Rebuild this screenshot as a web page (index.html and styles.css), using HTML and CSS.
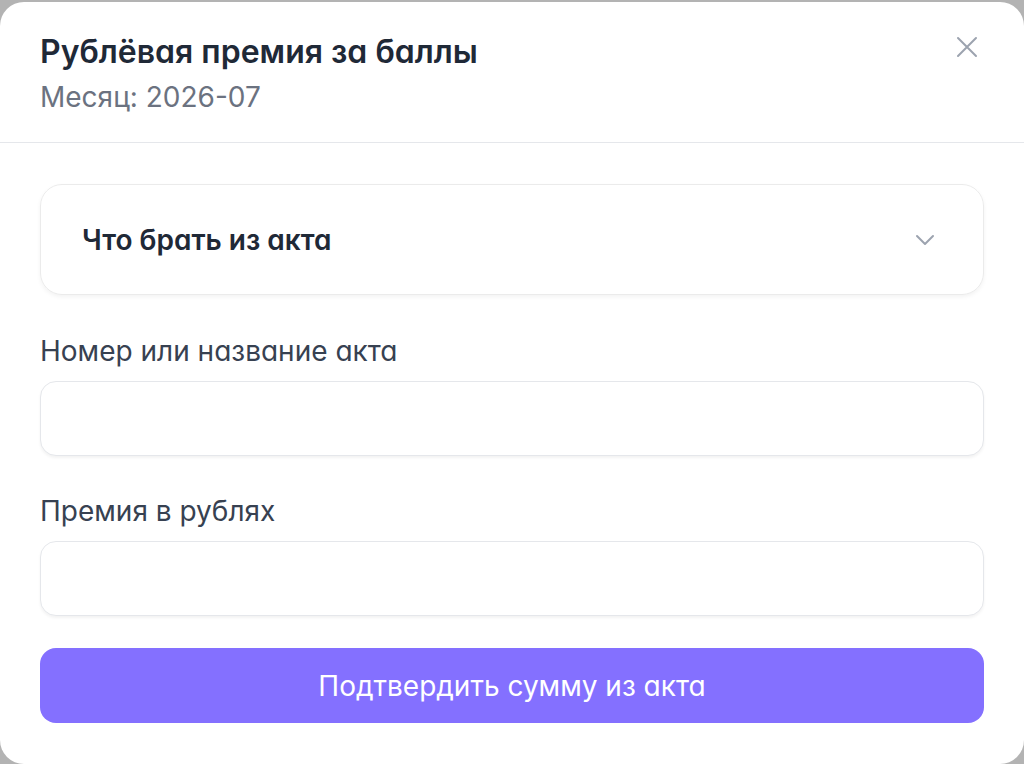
FILE: index.html
```html
<!DOCTYPE html>
<html lang="ru">
<head>
<meta charset="utf-8">
<title>Рублёвая премия за баллы</title>
<link rel="stylesheet" href="styles.css">
</head>
<body>
<div class="backdrop">
  <div class="modal">
    <div class="modal-header">
      <div class="heading">
        <h1 class="title">Рублёвая премия за баллы</h1>
        <div class="subtitle">Месяц: 2026-07</div>
      </div>
      <button class="close" aria-label="Закрыть">
        <svg width="22" height="22" viewBox="0 0 22 22" fill="none" stroke="currentColor" stroke-width="2" stroke-linecap="round"><path d="M2 2 L20 20 M20 2 L2 20"/></svg>
      </button>
    </div>
    <div class="modal-body">
      <div class="accordion">
        <span class="accordion-title">Что брать из акта</span>
        <svg class="chevron" width="20" height="12" viewBox="0 0 20 12" fill="none" stroke="currentColor" stroke-width="2" stroke-linecap="round" stroke-linejoin="round"><path d="M2 2 L10 10 L18 2"/></svg>
      </div>
      <label class="field">
        <span class="field-label">Номер или название акта</span>
        <input class="input" type="text">
      </label>
      <label class="field">
        <span class="field-label">Премия в рублях</span>
        <input class="input" type="text">
      </label>
      <button class="submit">Подтвердить сумму из акта</button>
    </div>
  </div>
</div>
</body>
</html>
```
FILE: styles.css
```css
* { box-sizing: border-box; }
html, body { margin: 0; padding: 0; height: 100%; }
body {
  background: #b3b3b3;
  font-family: Inter, "Noto Sans", sans-serif;
  font-feature-settings: "cv11";
  overflow: hidden;
}
.backdrop { padding-top: 2px; height: 100%; }
.modal {
  background: #fff;
  border-radius: 24px;
  height: 762px;
  display: flex;
  flex-direction: column;
  overflow: hidden;
}
.modal-header {
  display: flex;
  justify-content: space-between;
  align-items: flex-start;
  padding: 30px 40px 0 40px;
  height: 141px;
  flex-shrink: 0;
  border-bottom: 1px solid #e5e7eb;
}
.title {
  margin: 0;
  font-size: 32px;
  font-weight: 600;
  line-height: 40px;
  color: #1f2937;
}
.subtitle {
  margin-top: 8px;
  font-size: 28px;
  line-height: 34px;
  color: #6b7280;
}
.close {
  border: 0;
  background: none;
  padding: 0;
  margin: 4px 6px 0 0;
  color: #9ca3af;
  cursor: pointer;
  display: flex;
}
.modal-body {
  padding: 41px 40px 0 40px;
  display: flex;
  flex-direction: column;
}
.accordion {
  height: 111px;
  flex-shrink: 0;
  border: 1px solid #ebebeb;
  border-radius: 22px;
  box-shadow: 0 2px 4px rgba(0,0,0,0.05);
  display: flex;
  align-items: center;
  justify-content: space-between;
  padding: 0 48px 0 41px;
}
.accordion-title {
  font-size: 28px;
  font-weight: 600;
  color: #1f2937;
}
.chevron { color: #9ca3af; }
.field {
  display: flex;
  flex-direction: column;
  margin-top: 39px;
}
.field + .field { margin-top: 38px; }
.field-label {
  font-size: 28px;
  line-height: 34px;
  color: #374151;
  margin-bottom: 13px;
}
.input {
  height: 75px;
  border: 1px solid #e5e7eb;
  border-radius: 16px;
  box-shadow: 0 2px 3px rgba(0,0,0,0.05);
  font: inherit;
  padding: 0 20px;
  outline: none;
}
.submit {
  margin-top: 32px;
  height: 75px;
  flex-shrink: 0;
  border: 0;
  border-radius: 16px;
  background: #8470ff;
  color: #fff;
  font-family: inherit;
  font-feature-settings: "cv11";
  font-size: 28px;
  cursor: pointer;
}
```
